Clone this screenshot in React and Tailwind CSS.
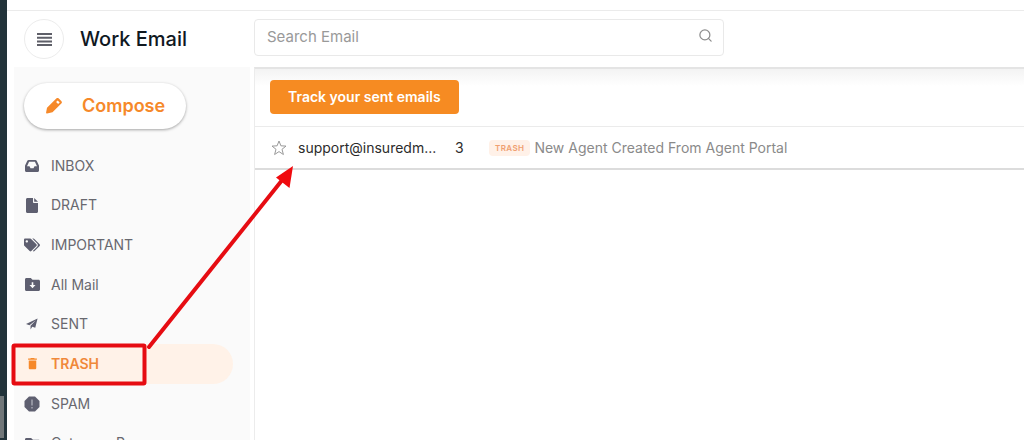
import React, { useState } from "react";
import { Search } from "lucide-react";
import { FaTags, FaFolder } from "react-icons/fa";
import { MdDelete } from "react-icons/md";

const MenuIcon = () => (
  <svg viewBox="0 0 15 13" className="w-[15px] h-[13px]" fill="currentColor">
    <path d="M0 0h15v2H0ZM0 3.700h15v2H0ZM0 7.400h15v2H0ZM0 11h15v2H0Z" />
  </svg>
);

const PencilIcon = () => (
  <svg viewBox="0 0 16 16" className="w-4 h-4" fill="currentColor">
    <path d="M8.500 2.200 10.300.5a1.800 1.800 0 0 1 2.500 0l2.500 2.500a1.800 1.800 0 0 1 0 2.500L6.500 14.200 1 15.500a.8.8 0 0 1-.9-.9L1 9.700Z" />
    <path d="m10.100 4.100 1.600-1.600 2 2-1.600 1.600Z" fill="#fff" />
  </svg>
);

const InboxIcon = () => (
  <svg viewBox="0 0 14 12" className="w-[14px] h-3" fill="currentColor">
    <path
      fillRule="evenodd"
      d="M3.700 0h6.600c.6 0 1.100.3 1.400.8l2 4.200c.2.4.3.700.3 1v4.500c0 .9-.6 1.500-1.500 1.500h-11C.6 12 0 11.400 0 10.500V6c0-.3.1-.6.3-1l2-4.200C2.600.3 3.100 0 3.700 0ZM4.100 1.800 2 6.300h2.500l1 2h3l1-2H12L9.900 1.800Z"
    />
  </svg>
);

const FileIcon = () => (
  <svg viewBox="0 0 12 15" className="w-3 h-[15px]" fill="currentColor">
    <path d="M1.500 0H7v4.200c0 .5.4.8.8.8H12v8.500c0 .9-.6 1.500-1.500 1.500h-9C.6 15 0 14.400 0 13.500v-12C0 .6.6 0 1.500 0Z" />
    <path d="M8.200 0 12 3.800H8.200Z" />
  </svg>
);

const FolderDownIcon = () => (
  <svg viewBox="0 0 15 13" className="w-[15px] h-[13px]" fill="currentColor">
    <path d="M1.500 0H5.800L7.500 1.800h6c.9 0 1.500.6 1.500 1.500v8.200c0 .9-.6 1.500-1.500 1.500h-12C.6 13 0 12.400 0 11.500v-10C0 .6.6 0 1.500 0Z" />
    <path d="M6.700 4.200h1.600V7H10.500L7.500 10.200 4.500 7h2.200Z" fill="#fafafa" />
  </svg>
);

const PlaneIcon = () => (
  <svg viewBox="0 0 14 13" className="w-3 h-3" fill="currentColor">
    <path d="M13.500 0 0 6.500 4 8 11.500 2.200 5.300 8.600V13L7.300 9.600 10.800 11Z" />
  </svg>
);

const SpamIcon = () => (
  <svg viewBox="0 0 16 16" className="w-4 h-4" fill="currentColor">
    <path d="M5 .5h6L15.500 5v6L11 15.500H5L.5 11V5Z" />
    <path d="M7.300 3.500h1.400v6H7.300ZM7.300 11h1.400v1.500H7.300Z" fill="#a9aab5" />
  </svg>
);

const StarIcon = () => (
  <svg viewBox="0 0 16 16" className="w-4 h-4" fill="none" stroke="currentColor">
    <path d="m8 1 1.900 4.800 5.100.3-4 3.200 1.400 5.200L8 11.600l-4.400 2.900L5 9.300 1 6.100l5.100-.3Z" />
  </svg>
);

const folders = [
  { name: "INBOX", icon: <InboxIcon /> },
  { name: "DRAFT", icon: <FileIcon /> },
  { name: "IMPORTANT", icon: <FaTags size={16} /> },
  { name: "All Mail", icon: <FolderDownIcon /> },
  { name: "SENT", icon: <PlaneIcon /> },
  { name: "TRASH", icon: <MdDelete size={15} /> },
  { name: "SPAM", icon: <SpamIcon /> },
  { name: "Category P", icon: <FaFolder size={15} /> },
];

const Sidebar = ({ active, onSelect }) => (
  <aside className="mr-1 w-[236px] shrink-0 bg-[#fafafa] pt-4">
    <button
      type="button"
      className="ml-[10px] flex h-[46px] w-[162px] items-center gap-5 rounded-full bg-white pl-[22px] text-lg font-semibold text-[#f6892a] shadow-[0_1px_3px_rgba(0,0,0,0.35)]"
    >
      <PencilIcon />
      Compose
    </button>

    <nav className="mt-[17px] flex h-[317px] flex-col">
      {folders.map((folder) => (
        <a
          key={folder.name}
          href="#"
          onClick={() => onSelect(folder.name)}
          className={
            folder.name === active
              ? "mr-[17px] flex flex-1 items-center gap-[11px] rounded-r-full bg-[#fff2e8] pl-[10px] text-sm font-semibold text-[#f0883a]"
              : "mr-[17px] flex flex-1 items-center gap-[11px] pl-[10px] text-sm text-[#68686f]"
          }
        >
          <span
            className={
              folder.name === active
                ? "flex w-4 justify-center text-[#f6892a]"
                : "flex w-4 justify-center text-[#5e5f70]"
            }
          >
            {folder.icon}
          </span>
          {folder.name}
        </a>
      ))}
    </nav>
  </aside>
);

const App = () => {
  const [active, setActive] = useState("TRASH");
  const [query, setQuery] = useState("");

  return (
    <div className="relative flex h-screen overflow-hidden bg-white font-['Inter',sans-serif]">
      {/* APP RAIL */}
      <div className="flex w-[7px] shrink-0 flex-col justify-end bg-[#22333a]">
        <div className="mb-[2px] h-[42px] w-1 bg-[#717779]" />
      </div>

      <div className="flex min-w-0 flex-1 flex-col pt-[10px]">
        {/* HEADER */}
        <header className="flex h-[57px] shrink-0 items-center border-t border-[#ebebeb]">
          <div className="flex w-[247px] shrink-0 items-center gap-4 pl-[17px]">
            <button
              type="button"
              aria-label="Menu"
              className="flex h-10 w-10 items-center justify-center rounded-full border border-[#ececec] text-[#5e5f68]"
            >
              <MenuIcon />
            </button>
            <h1 className="text-xl font-medium text-[#10181f]">Work Email</h1>
          </div>

          <div className="mb-1 flex h-[37px] w-[47%] max-w-[470px] items-center rounded border border-[#e9e9e9] pl-3 pr-[10px]">
            <input
              type="text"
              aria-label="Search Email"
              placeholder="Search Email"
              value={query}
              onChange={(e) => setQuery(e.target.value)}
              className="min-w-0 flex-1 text-[15px] placeholder:text-[#999] focus:outline-none"
            />
            <button type="button" aria-label="Search" className="mb-1 text-[#8d8d8d]">
              <Search size={15} />
            </button>
          </div>
        </header>

        <div className="flex min-h-0 flex-1 pl-[7px]">
          <Sidebar active={active} onSelect={setActive} />

          {/* MAIL LIST */}
          <main className="min-w-0 flex-1 border-l border-t-2 border-l-[#ececec] border-t-[#e4e4e4]">
            <div className="bg-linear-to-b from-[#f3f3f3] to-white to-30% px-[15px] pb-3 pt-[11px]">
              <button
                type="button"
                className="h-[34px] rounded bg-[#f68b22] px-[18px] text-sm font-semibold text-white"
              >
                Track your sent emails
              </button>
            </div>

            <div className="flex h-11 items-center border-b-2 border-t border-b-[#dcdcdc] border-t-[#ebebeb] pl-4 text-sm">
              <button type="button" aria-label="Star" className="text-[#999]">
                <StarIcon />
              </button>
              <span className="ml-[11px] w-[140px] whitespace-nowrap text-[#2c2c2c]">
                support@insuredm...
              </span>
              <span className="ml-[17px] w-[34px] text-[#2c2c2c]">3</span>
              <span className="rounded-sm bg-[#fff1e8] px-[6px] text-[8px] font-semibold leading-4 tracking-wider text-[#f0a070]">
                TRASH
              </span>
              <span className="ml-1 text-[#8a8a8a]">
                New Agent Created From Agent Portal
              </span>
            </div>
          </main>
        </div>
      </div>

      {/* ANNOTATION */}
      <svg
        className="pointer-events-none absolute left-0 top-0"
        width="320"
        height="440"
        viewBox="0 0 320 440"
        fill="none"
      >
        <rect x="13.500" y="345.500" width="131" height="38" rx="1" stroke="#e60c12" strokeWidth="4" />
        <path d="M149 347 283 179" stroke="#e60c12" strokeWidth="4" strokeLinecap="round" />
        <path d="M293 166 289.500 188 276 177.500Z" fill="#f00a0e" />
      </svg>
    </div>
  );
};

export default App;
